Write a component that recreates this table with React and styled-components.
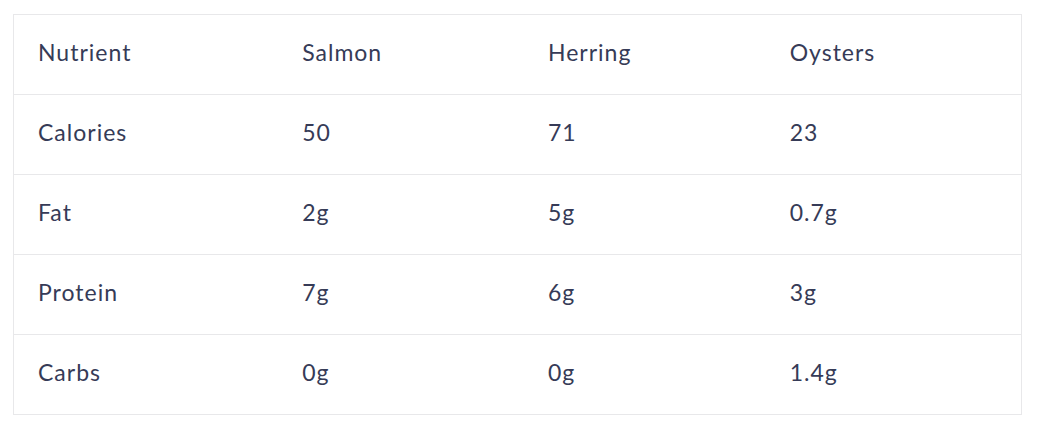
import React from "react"
import styled, { createGlobalStyle } from "styled-components"

const GlobalStyle = createGlobalStyle`
  body {
    margin: 0;
    background: #ffffff;
    font-family: "Lato", "Liberation Sans", sans-serif;
  }
`

const Wrap = styled.div`
  padding: 14px 20px 15px 13px;
`

const Table = styled.table`
  width: 1009px;
  border-collapse: collapse;
  border: 1px solid #e8e8ea;
  color: #363b57;
  font-size: 23px;
  letter-spacing: 1px;
`

const Cell = styled.td`
  box-sizing: border-box;
  height: 80px;
  padding: 0 0 5px 24px;
  text-align: left;
  vertical-align: middle;
  font-weight: 400;
  border-bottom: 1px solid #e8e8ea;
  width: ${(p) => p.$w}px;
`

const widths = [265, 246, 242, 256]

const rows = [
  ["Nutrient", "Salmon", "Herring", "Oysters"],
  ["Calories", "50", "71", "23"],
  ["Fat", "2g", "5g", "0.7g"],
  ["Protein", "7g", "6g", "3g"],
  ["Carbs", "0g", "0g", "1.4g"],
]

export default function App() {
  return (
    <>
      <GlobalStyle />
      <Wrap>
        <Table>
          <tbody>
            {rows.map((r, i) => (
              <tr key={i}>
                {r.map((c, j) => (
                  <Cell key={j} $w={widths[j]} as={i === 0 ? "th" : "td"}>
                    {c}
                  </Cell>
                ))}
              </tr>
            ))}
          </tbody>
        </Table>
      </Wrap>
    </>
  )
}
